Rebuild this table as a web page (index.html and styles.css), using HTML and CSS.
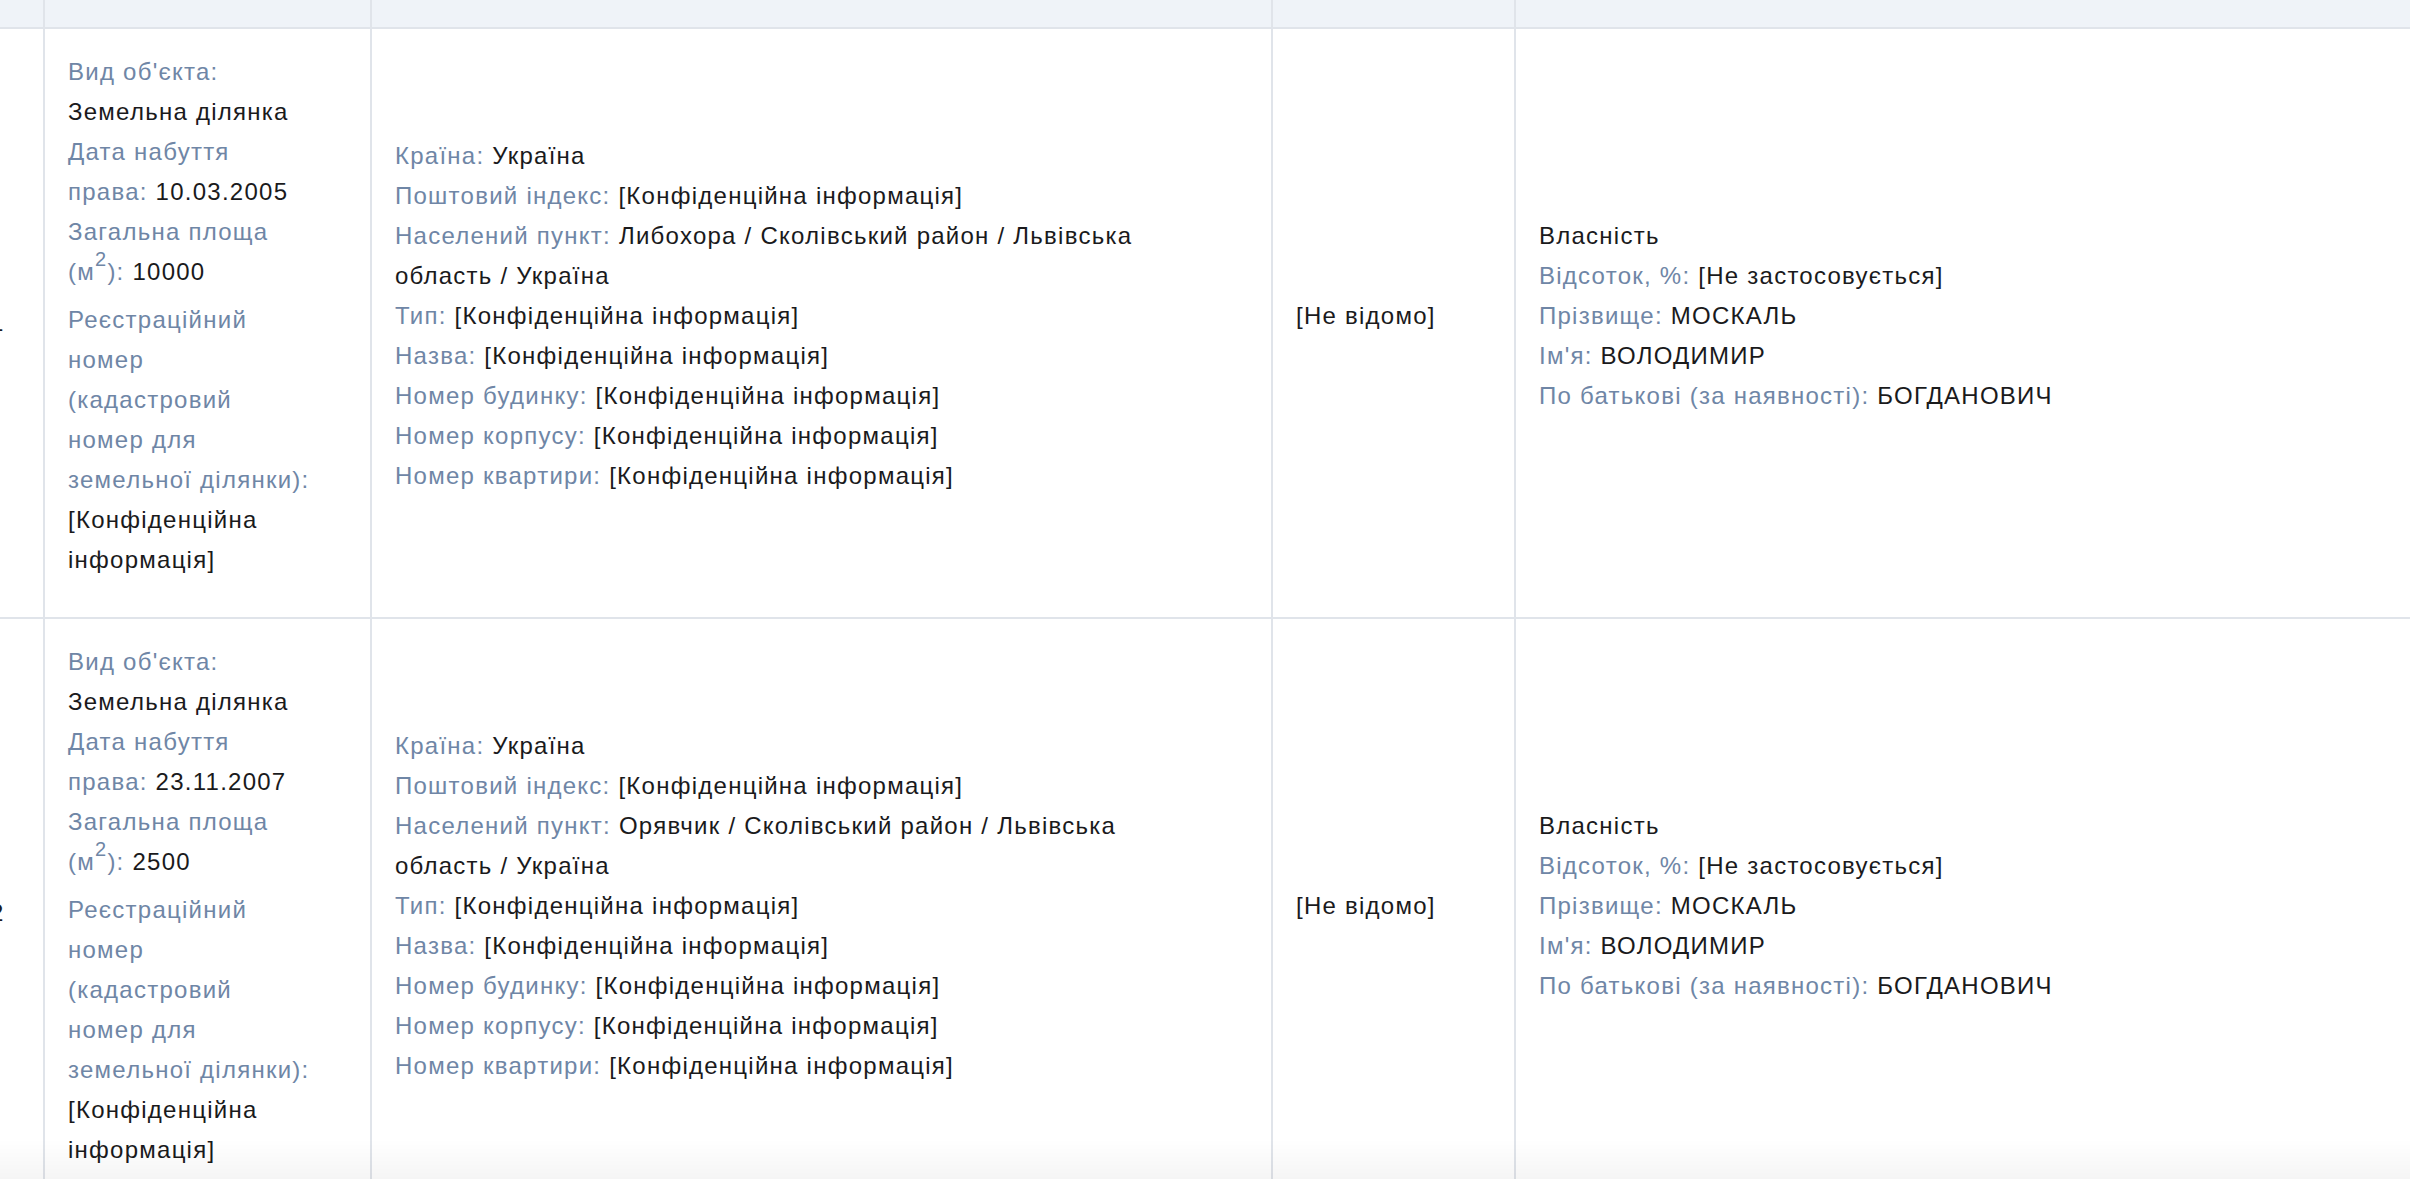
FILE: index.html
```html
<!DOCTYPE html>
<html lang="uk">
<head>
<meta charset="utf-8">
<title>Об'єкти нерухомості</title>
<link rel="stylesheet" href="styles.css">
</head>
<body>
<div class="viewport">
  <div class="grid">
    <div class="cell head"></div>
    <div class="cell head"></div>
    <div class="cell head"></div>
    <div class="cell head"></div>
    <div class="cell head"></div>

    <div class="cell num">1</div>
    <div class="cell body">
      <div class="stack narrow">
        <div class="item"><span class="lbl">Вид об'єкта:</span> Земельна ділянка</div>
        <div class="item"><span class="lbl">Дата набуття права:</span> 10.03.2005</div>
        <div class="item area"><span class="lbl">Загальна площа (м<sup>2</sup>):</span> 10000</div>
        <div class="item"><span class="lbl">Реєстраційний номер (кадастровий номер для земельної ділянки):</span> [Конфіденційна інформація]</div>
      </div>
    </div>
    <div class="cell body">
      <div class="stack wide">
        <div class="item"><span class="lbl">Країна:</span> Україна</div>
        <div class="item"><span class="lbl">Поштовий індекс:</span> [Конфіденційна інформація]</div>
        <div class="item"><span class="lbl">Населений пункт:</span> Либохора / Сколівський район / Львівська область / Україна</div>
        <div class="item"><span class="lbl">Тип:</span> [Конфіденційна інформація]</div>
        <div class="item"><span class="lbl">Назва:</span> [Конфіденційна інформація]</div>
        <div class="item"><span class="lbl">Номер будинку:</span> [Конфіденційна інформація]</div>
        <div class="item"><span class="lbl">Номер корпусу:</span> [Конфіденційна інформація]</div>
        <div class="item"><span class="lbl">Номер квартири:</span> [Конфіденційна інформація]</div>
      </div>
    </div>
    <div class="cell body">
      <div class="stack">
        <div class="item">[Не відомо]</div>
      </div>
    </div>
    <div class="cell body">
      <div class="stack">
        <div class="item">Власність</div>
        <div class="item"><span class="lbl">Відсоток, %:</span> [Не застосовується]</div>
        <div class="item"><span class="lbl">Прізвище:</span> МОСКАЛЬ</div>
        <div class="item"><span class="lbl">Ім'я:</span> ВОЛОДИМИР</div>
        <div class="item"><span class="lbl">По батькові (за наявності):</span> БОГДАНОВИЧ</div>
      </div>
    </div>

    <div class="cell num">2</div>
    <div class="cell body">
      <div class="stack narrow">
        <div class="item"><span class="lbl">Вид об'єкта:</span> Земельна ділянка</div>
        <div class="item"><span class="lbl">Дата набуття права:</span> 23.11.2007</div>
        <div class="item area"><span class="lbl">Загальна площа (м<sup>2</sup>):</span> 2500</div>
        <div class="item"><span class="lbl">Реєстраційний номер (кадастровий номер для земельної ділянки):</span> [Конфіденційна інформація]</div>
      </div>
    </div>
    <div class="cell body">
      <div class="stack wide">
        <div class="item"><span class="lbl">Країна:</span> Україна</div>
        <div class="item"><span class="lbl">Поштовий індекс:</span> [Конфіденційна інформація]</div>
        <div class="item"><span class="lbl">Населений пункт:</span> Орявчик / Сколівський район / Львівська область / Україна</div>
        <div class="item"><span class="lbl">Тип:</span> [Конфіденційна інформація]</div>
        <div class="item"><span class="lbl">Назва:</span> [Конфіденційна інформація]</div>
        <div class="item"><span class="lbl">Номер будинку:</span> [Конфіденційна інформація]</div>
        <div class="item"><span class="lbl">Номер корпусу:</span> [Конфіденційна інформація]</div>
        <div class="item"><span class="lbl">Номер квартири:</span> [Конфіденційна інформація]</div>
      </div>
    </div>
    <div class="cell body">
      <div class="stack">
        <div class="item">[Не відомо]</div>
      </div>
    </div>
    <div class="cell body">
      <div class="stack">
        <div class="item">Власність</div>
        <div class="item"><span class="lbl">Відсоток, %:</span> [Не застосовується]</div>
        <div class="item"><span class="lbl">Прізвище:</span> МОСКАЛЬ</div>
        <div class="item"><span class="lbl">Ім'я:</span> ВОЛОДИМИР</div>
        <div class="item"><span class="lbl">По батькові (за наявності):</span> БОГДАНОВИЧ</div>
      </div>
    </div>
  </div>
</div>
<div class="shade"></div>
</body>
</html>
```
FILE: styles.css
```css
html, body {
  margin: 0;
  padding: 0;
  background: #ffffff;
}

body {
  width: 2410px;
  height: 1179px;
  overflow: hidden;
  font-family: "Liberation Sans", Arial, Helvetica, sans-serif;
  font-size: 24px;
  line-height: 40px;
  letter-spacing: 1.25px;
  color: #1a1a1c;
}

.viewport {
  width: 2410px;
  height: 1179px;
  overflow: hidden;
}

.grid {
  display: grid;
  grid-template-columns: 78px 327px 901px 243px 1000px;
  grid-template-rows: 29px 590px 590px;
  margin-left: -33px;
  width: max-content;
}

.cell {
  box-sizing: border-box;
  border-right: 2px solid #e0e4ea;
  border-bottom: 2px solid #e0e4ea;
}

.head {
  background: #eff3f8;
}

.num {
  display: flex;
  align-items: center;
  padding-left: 23px;
}

.body {
  display: flex;
  flex-direction: column;
  justify-content: center;
  padding: 23px 20px 37px 23px;
}

.stack {
  display: flex;
  flex-direction: column;
}

.stack.narrow {
  width: 246px;
}

.stack.wide {
  width: 790px;
}

.lbl {
  color: #6f86a6;
}

.item.area {
  padding-bottom: 8px;
}

sup {
  font-size: 20px;
  line-height: 0;
  vertical-align: 14px;
}

.shade {
  position: fixed;
  left: 0;
  right: 0;
  bottom: 0;
  height: 40px;
  background: linear-gradient(to bottom, rgba(0, 0, 0, 0), rgba(0, 0, 0, 0.04));
  pointer-events: none;
}
```
